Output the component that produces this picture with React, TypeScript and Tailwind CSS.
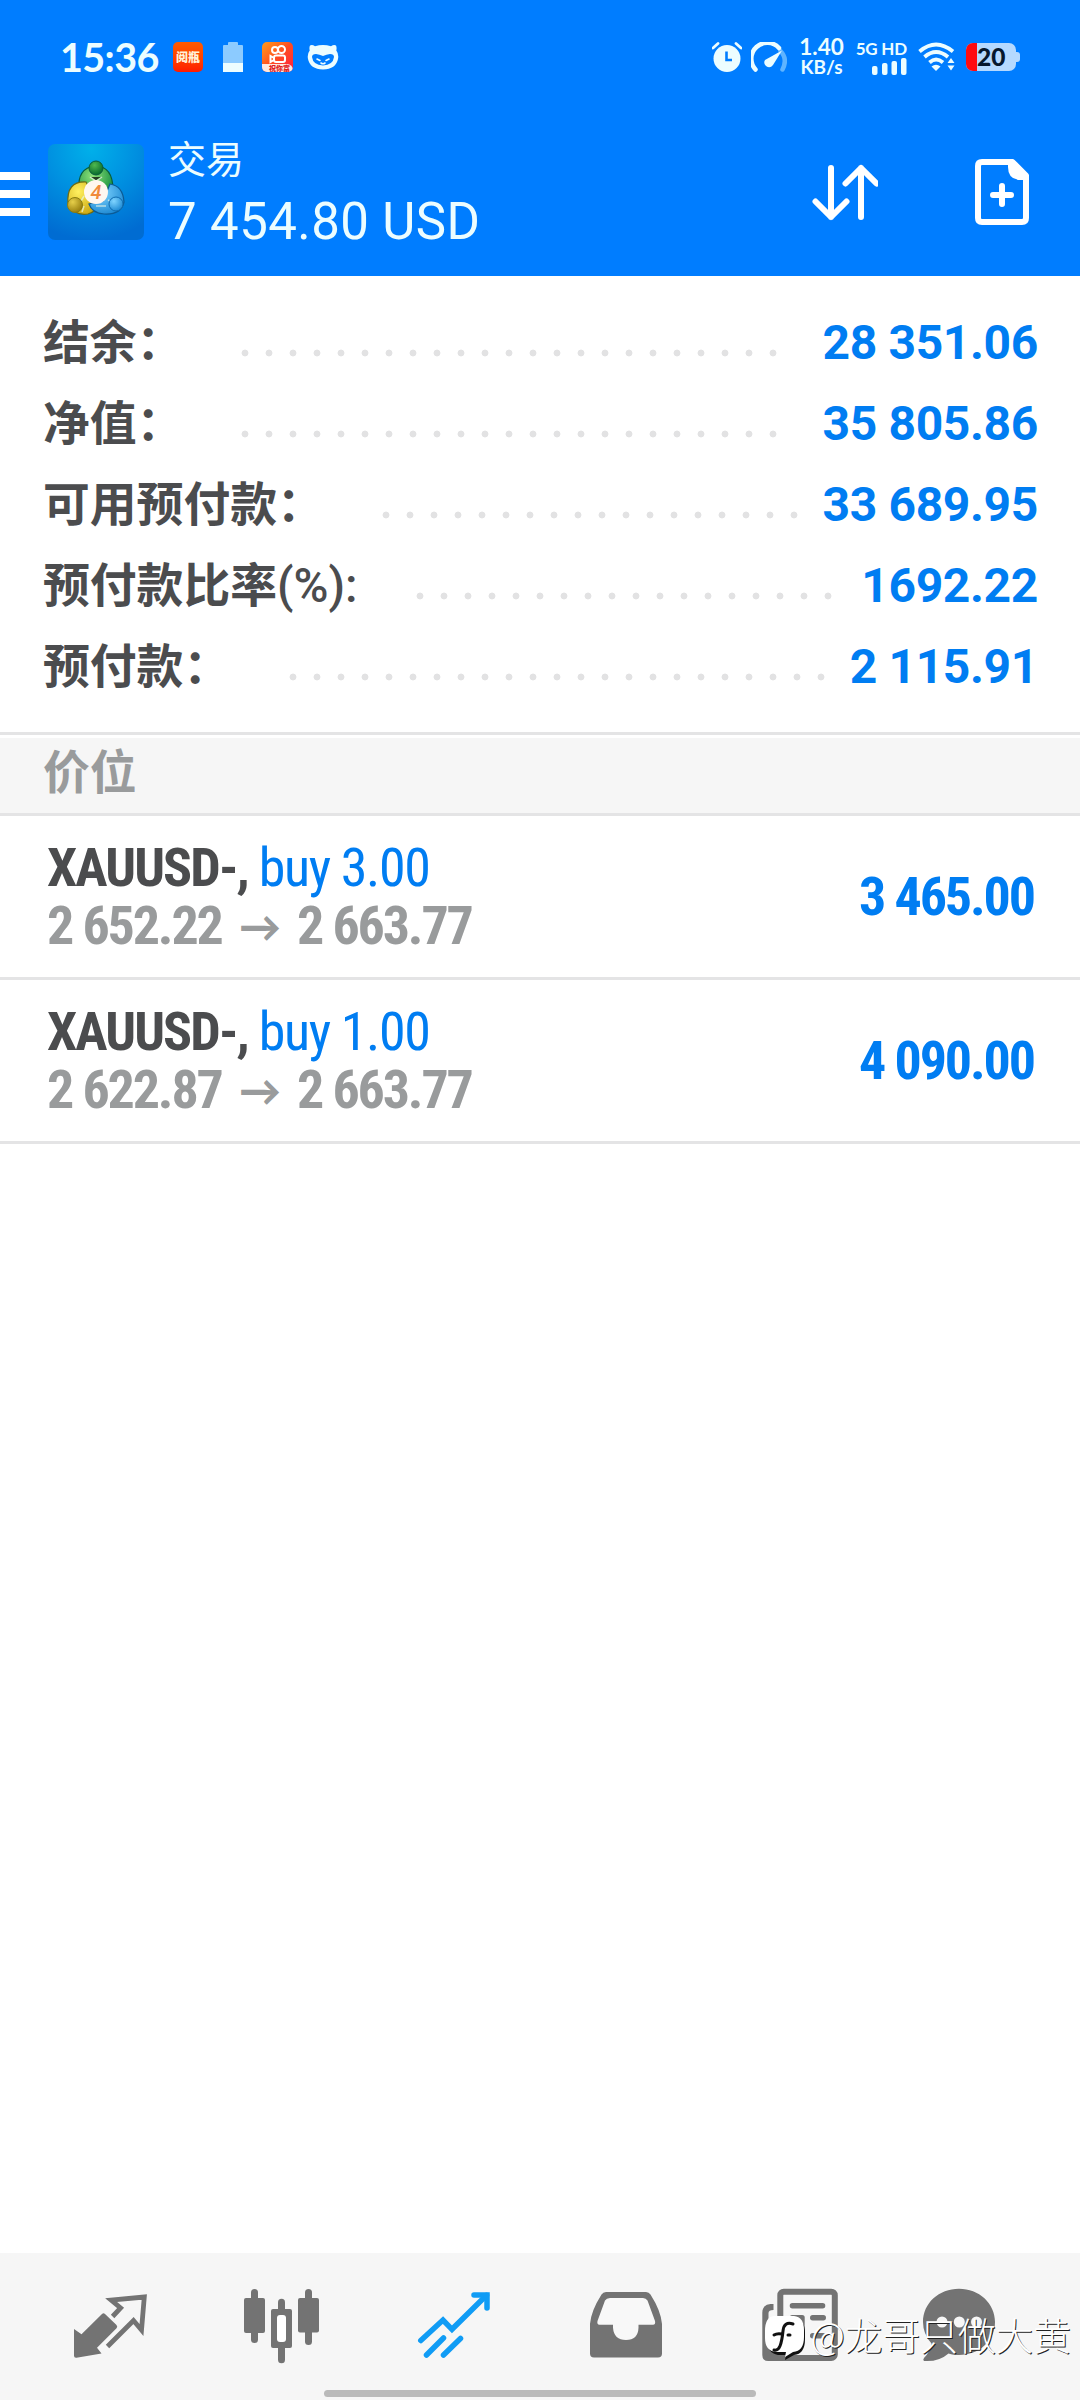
import type { ReactNode } from "react";

type Summary = {
  label: string;
  suffix?: string;
  labelClass: string;
  dotsClass: string;
  value: string;
};

type Position = {
  id: number;
  symbol: string;
  side: string;
  open: string;
  current: string;
  profit: string;
};

const summary: Summary[] = [
  { label: "结余：", labelClass: "w-[190px]", dotsClass: "w-[552px]", value: "28 351.06" },
  { label: "净值：", labelClass: "w-[190px]", dotsClass: "w-[552px]", value: "35 805.86" },
  { label: "可用预付款：", labelClass: "w-[331px]", dotsClass: "w-[432px]", value: "33 689.95" },
  { label: "预付款比率", suffix: "(%):", labelClass: "w-[365px]", dotsClass: "w-[432px]", value: "1692.22" },
  { label: "预付款：", labelClass: "w-[238px]", dotsClass: "w-[552px]", value: "2 115.91" },
];

const positions: Position[] = [
  { id: 1, symbol: "XAUUSD-,", side: "buy 3.00", open: "2 652.22", current: "2 663.77", profit: "3 465.00" },
  { id: 2, symbol: "XAUUSD-,", side: "buy 1.00", open: "2 622.87", current: "2 663.77", profit: "4 090.00" },
];

function StatusBar() {
  return (
    <div className="flex h-[114px] items-center pl-[60px] pr-[60px] text-[#ecfdff]">
      <span className="w-[113px] font-['Lato',sans-serif] text-[39.500px] leading-none font-bold tracking-[-0.600px]">15:36</span>

      <div className="flex h-[30px] w-[30px] items-center justify-center overflow-hidden rounded-[5px] bg-linear-to-b from-[#ff5a00] to-[#ff1a00] font-['Noto_Sans_CJK_SC',sans-serif] text-[12px] leading-none font-black whitespace-nowrap text-[#fff3d8]">
        阅瓶
      </div>

      <svg className="ml-[20px]" width="20" height="30" viewBox="0 0 20 30">
        <path d="M0 4q0-1 1-1h4V1q0-1 1-1h8q1 0 1 1v2h4q1 0 1 1v17H0z" fill="#8ccbff" />
        <path d="M0 21h20v9H0z" fill="#ecfdff" />
      </svg>

      <div className="ml-[19px] flex h-[30px] w-[31px] flex-col overflow-hidden rounded-[5px] bg-linear-to-br from-[#ff9a1a] via-[#ff4a20] to-[#ff1040]">
        <svg className="h-[22px]" width="31" height="22" viewBox="0 0 31 22" fill="none" stroke="#fff" strokeWidth="2">
          <circle cx="13" cy="8" r="3" />
          <circle cx="19.500" cy="7.500" r="3.500" />
          <rect x="12" y="13.500" width="11" height="6.500" rx="2" />
          <path d="M12 16l-3.500-2v6L12 18" />
        </svg>
        <span className="h-[8px] rounded-tr-[6px] bg-[#ffe9e0] pl-[7px] font-['Noto_Sans_CJK_SC',sans-serif] text-[7px] leading-[8px] font-black whitespace-nowrap text-[#e02020]">
          祝你富
        </span>
      </div>

      <svg className="ml-[14px]" width="32" height="26" viewBox="0 0 32 26">
        <path d="M3 1.500q2-1.500 5 .8Q16-.2 24 2.300q3-2.300 5-.8 1 2 .3 5Q32 10 31 15q-2 10-15 10.500Q3 25 1 15 0 10 2.700 6.500 2 3.500 3 1.500z" fill="#ecfdff" />
        <path d="M5 13q0-3 4-3 3.500.3 7 2 3.500-1.700 7-2 4 0 4 3-1 8-11 8.500Q6 21 5 13z" fill="#007dff" />
        <path d="M10 15l3 1.500M22 15l-3 1.500M14 19q2 1.500 4 0" stroke="#ecfdff" strokeWidth="1.600" fill="none" strokeLinecap="round" />
      </svg>

      <div className="ml-auto flex items-center">
        <svg width="30" height="30" viewBox="0 0 30 30">
          <circle cx="15" cy="16.500" r="13.500" fill="#ecfdff" />
          <path d="M1 6l5-4.500M29 6l-5-4.500" stroke="#ecfdff" strokeWidth="2.800" strokeLinecap="round" />
          <path d="M14.500 9.500V18H20" fill="none" stroke="#007dff" strokeWidth="2.600" />
        </svg>
        <svg className="ml-[9px]" width="36" height="30" viewBox="0 0 36 30" fill="none" strokeLinecap="round">
          <path d="M29.500 9Q37 17 31.500 27.500" stroke="#5fb4ff" strokeWidth="4.500" />
          <path d="M4.500 27.500A15.500 15.500 0 0 1 28 6" stroke="#ecfdff" strokeWidth="4.500" />
          <path d="M14 18L31 8.500 22 23q-3 4-7 1-3-3-1-6z" fill="#ecfdff" />
        </svg>
        <div className="ml-[11px] flex w-[47px] flex-col items-center font-['Lato',sans-serif] font-bold">
          <span className="text-[22.500px] leading-[20px]">1.40</span>
          <span className="text-[19px] leading-[20px]">KB/s</span>
        </div>
        <div className="ml-[12px] flex w-[50px] flex-col items-end">
          <span className="font-['Lato',sans-serif] text-[17px] leading-[19px] font-bold tracking-[-0.200px] whitespace-nowrap">5G HD</span>
          <svg width="36" height="17" viewBox="0 0 36 17" fill="#ecfdff">
            <rect x="1" y="8" width="5.500" height="9" rx="2" />
            <rect x="11" y="5" width="5.500" height="12" rx="2" />
            <rect x="20.500" y="3" width="5.500" height="14" rx="2" />
            <rect x="30" y="0" width="5.500" height="17" rx="2" />
          </svg>
        </div>
        <svg className="ml-[11px]" width="38" height="30" viewBox="0 0 38 30" fill="none" stroke="#ecfdff" strokeWidth="3.800">
          <path d="M1.500 9.500Q18 -4.500 35 9.500" />
          <path d="M6.500 15Q18 5 30 15" />
          <path d="M11.500 20.500Q18 14.500 25 20.500" />
          <path d="M13.500 24.500Q18 21 22.500 24.500L18 29z" fill="#ecfdff" stroke="none" />
          <path d="M29.500 21l3.500-5 3.500 5zM29.500 23.500l3.500 5 3.500-5z" fill="#ecfdff" stroke="none" />
        </svg>
        <div className="ml-[10px] flex items-center">
          <div className="flex h-[28px] w-[50px] items-center rounded-[7px] bg-[#b5d9ff]">
            <span className="h-full w-[11px] shrink-0 rounded-l-[7px] bg-[#ff0a10]" />
            <span className="font-['Lato',sans-serif] text-[24.500px] leading-[28px] font-black text-[#06182e]">20</span>
          </div>
          <span className="h-[10px] w-[4px] rounded-r-[3px] bg-[#b5d9ff]" />
        </div>
      </div>
    </div>
  );
}

function AppLogo() {
  return (
    <svg className="ml-[18px]" width="96" height="96" viewBox="0 0 96 96">
      <defs>
        <radialGradient id="tile" cx="0.450" cy="0.050" r="0.950">
          <stop offset="0" stopColor="#00b0ea" />
          <stop offset="0.500" stopColor="#008fe0" />
          <stop offset="1" stopColor="#006cd2" />
        </radialGradient>
        <radialGradient id="green" cx="0.400" cy="0.300" r="0.700">
          <stop offset="0" stopColor="#8fe27a" />
          <stop offset="1" stopColor="#0f8a3c" />
        </radialGradient>
        <radialGradient id="greenHead" cx="0.400" cy="0.300" r="0.700">
          <stop offset="0" stopColor="#4fb84e" />
          <stop offset="1" stopColor="#066a2c" />
        </radialGradient>
        <radialGradient id="yellow" cx="0.350" cy="0.300" r="0.800">
          <stop offset="0" stopColor="#fff060" />
          <stop offset="1" stopColor="#c9a40c" />
        </radialGradient>
        <radialGradient id="yellowHead" cx="0.350" cy="0.300" r="0.800">
          <stop offset="0" stopColor="#e6cf4a" />
          <stop offset="1" stopColor="#8f7608" />
        </radialGradient>
        <radialGradient id="sky" cx="0.350" cy="0.300" r="0.800">
          <stop offset="0" stopColor="#7fd4ff" />
          <stop offset="1" stopColor="#1583cf" />
        </radialGradient>
      </defs>
      <rect width="96" height="96" rx="7" fill="url(#tile)" />
      <path d="M31 46Q29 24 47 22q18 0 18 24 0 6-4 9L34 50z" fill="url(#green)" stroke="#0a5c3a" strokeWidth="1.200" />
      <path d="M38 38q-20-1-18 22 6 12 20 10 8-2 10-10z" fill="url(#yellow)" stroke="#6e6a12" strokeWidth="1.200" />
      <path d="M62 40q13 2 14 18-3 13-20 12-12-1-15-10l14-3z" fill="url(#sky)" stroke="#0c5a94" strokeWidth="1.200" />
      <path d="M36 52l-6 10M36 62l-2 6M58 62l-10 0M60 56l4 2M42 33l6 4 6-4" stroke="#e8f6e8" strokeWidth="1.500" opacity="0.700" />
      <circle cx="48" cy="24" r="7" fill="url(#greenHead)" stroke="#0a5c3a" />
      <circle cx="27" cy="61" r="7.500" fill="url(#yellowHead)" stroke="#8a7c10" />
      <circle cx="68" cy="60" r="7" fill="url(#sky)" stroke="#0f6cb0" />
      <circle cx="48" cy="48" r="12" fill="#fff7f0" />
      <text x="48" y="55" textAnchor="middle" fontSize="20" fontWeight="500" fontStyle="italic" fontFamily="Roboto, sans-serif" fill="#f08a3c">
        4
      </text>
    </svg>
  );
}

function Header() {
  return (
    <header className="bg-[#007dff]">
      <StatusBar />
      <div className="flex h-[162px] items-start pt-[30px] pr-[51px]">
        <div className="mt-[28px] flex w-[30px] flex-col gap-[10px]">
          <span className="h-[8px] bg-white" />
          <span className="h-[8px] bg-white" />
          <span className="h-[8px] bg-white" />
        </div>
        <AppLogo />
        <div className="ml-[24px] flex flex-col font-['Roboto','Noto_Sans_CJK_SC',sans-serif] text-[#ecfdff]">
          <span className="-mt-[8px] text-[38px] leading-[49px]">交易</span>
          <span className="text-[51px] leading-[73px] tracking-[0.400px]">7 454.80 USD</span>
        </div>
        <div className="mt-[15px] ml-auto flex items-center">
          <svg width="66" height="66" viewBox="0 0 66 66" fill="none" stroke="#fff" strokeWidth="6" strokeLinecap="round" strokeLinejoin="round">
            <path d="M19 9v49M3.500 42.500L19 58l15.500-15.500" />
            <path d="M49 58V9M33.500 24.500L49 9l15.500 15.500" />
          </svg>
          <svg className="ml-[97px]" width="54" height="66" viewBox="0 0 54 66" fill="none" stroke="#fff" strokeWidth="6" strokeLinejoin="round">
            <path d="M7 3h30.500L51 16.500V59q0 4-4 4H7q-4 0-4-4V7q0-4 4-4z" />
            <path d="M33 4v4q0 13 13 13h6V16L39 2z" fill="#fff" stroke="none" />
            <path d="M27 27v18M18 36h18" strokeLinecap="round" />
          </svg>
        </div>
      </div>
    </header>
  );
}

function SummaryRow({ item }: { item: Summary }) {
  return (
    <div className="flex h-[81px] items-start font-bold">
      <span className={`shrink-0 text-[46.800px] leading-[83px] whitespace-nowrap text-[#4b4c4e] ${item.labelClass}`}>
        {item.label}
        {item.suffix && <span className="text-[47.500px] font-medium">{item.suffix}</span>}
      </span>
      <span
        className={`mt-[47px] h-[8px] shrink-0 bg-[radial-gradient(circle_at_12px_4px,#e2e2e3_3px,transparent_3.800px)] bg-[length:24px_8px] ${item.dotsClass}`}
      />
      <span className="ml-auto text-[48px] leading-[82px] tracking-[-0.350px] whitespace-nowrap text-[#007df2]">{item.value}</span>
    </div>
  );
}

function PositionRow({ item }: { item: Position }) {
  return (
    <div className="flex h-[164px] items-center border-b-[3px] border-[#e4e4e5] pr-[46px] pl-[47px] font-['Roboto_Condensed','Roboto',sans-serif] text-[54px] font-bold whitespace-nowrap">
      <div className="flex flex-col leading-[58px]">
        <p className="text-[#4b4c4e]">
          <span className="tracking-[-1.900px]">{item.symbol}</span>
          <span className="ml-[11px] font-normal tracking-[-1.400px] text-[#007df2]">{item.side}</span>
        </p>
        <p className="flex text-[#999b9c]">
          <span className="w-[192px] tracking-[-2.150px]">{item.open}</span>
          <span className="w-[58px] font-['Lato',sans-serif] text-[42px] font-black">→</span>
          <span className="tracking-[-2.150px]">{item.current}</span>
        </p>
      </div>
      <span className="ml-auto tracking-[-2.100px] text-[#007df2]">{item.profit}</span>
    </div>
  );
}

function NavIcon({ children }: { children: ReactNode }) {
  return (
    <svg width="84" height="84" viewBox="0 0 84 84" fill="#737373">
      {children}
    </svg>
  );
}

function BottomNav() {
  return (
    <nav className="relative h-[147px] bg-[#f6f6f6] pt-[30px] pl-[24px]">
      <div className="flex">
        <div className="flex w-[172px] justify-center">
          <NavIcon>
            <path d="M6 46l7.500 5.300 20.500-20.300q1.500-1.300 3 0l11.500 11q1.500 1.700 0 3.200L29 64.700l4.500 5.800L8.500 74.700Q6 75 6 72.700z" />
            <path d="M44.600 33.500l8-8.500-9.500-8 33.200-3-2.800 33-8-9.500-26 26" fill="none" stroke="#737373" strokeWidth="4.800" />
          </NavIcon>
        </div>
        <div className="flex w-[172px] justify-center">
          <NavIcon>
            <rect x="11" y="6" width="7" height="54" rx="3.500" />
            <rect x="4" y="15" width="21" height="35" rx="2" />
            <rect x="38" y="15.700" width="7" height="64.500" rx="3.500" />
            <rect x="31" y="26" width="21" height="39" rx="2" />
            <rect x="37" y="32" width="9" height="27" rx="3" fill="#fff" />
            <rect x="65" y="6" width="7" height="56" rx="3.500" />
            <rect x="58" y="15" width="21" height="34.500" rx="2" />
          </NavIcon>
        </div>
        <div className="flex w-[172px] justify-center">
          <NavIcon>
            <g fill="none" stroke="#109cf5" strokeWidth="5.500" strokeLinecap="round">
              <path d="M8.800 57.500L31 37l9 9.300 34.500-34" />
              <path d="M62 12h13v13" />
              <path d="M14.500 72l17-17M31.500 72l17-16.500" />
            </g>
          </NavIcon>
        </div>
        <div className="flex w-[172px] justify-center">
          <NavIcon>
            <path d="M22 9h40q3 0 4.500 2.500Q77 28 78 41v29.500q0 4-4 4H10q-4 0-4-4V41Q7 28 17.500 11.500 19 9 22 9z" />
            <path d="M26 15h33q3 0 4.500 2.500L71 38q.8 3.700-2 3.700H54.500v3Q54 57 42 57T29 44.700v-3H15.500q-2.800 0-2-3.700L21 17.500Q22.500 15 26 15z" fill="#f8f8f8" />
          </NavIcon>
        </div>
        <div className="flex w-[175px] justify-center">
          <NavIcon>
            <path d="M15.500 21h-3Q4.300 21.500 4.300 30v42q0 6 6 6h20V62H10.500V30q0-3 5-3z" />
            <rect x="22.300" y="8.700" width="54.500" height="66.300" rx="3.500" fill="#f6f6f6" stroke="#737373" strokeWidth="6" />
            <rect x="31.700" y="20" width="35.600" height="5.500" rx="2.700" />
            <rect x="31.700" y="32" width="15" height="24" rx="2.500" />
            <rect x="52" y="32" width="16" height="5.500" rx="2.700" />
            <rect x="52" y="50" width="16" height="5.500" rx="2.700" />
          </NavIcon>
        </div>
        <div className="flex w-[143px] justify-center">
          <NavIcon>
            <path d="M42 5.700c20 0 36 14.500 36 33.300S62 72 42 72c-4 0-7-.5-10.500-1.500Q22 79 7 78q-1.500-1 0-3 6-6 7.500-14.500Q6 51 6 39C6 20 22 5.700 42 5.700z" />
            <circle cx="25" cy="39" r="5.500" fill="#f6f6f6" />
            <circle cx="42.300" cy="39" r="5.500" fill="#f6f6f6" />
            <circle cx="59.500" cy="39" r="5.500" fill="#f6f6f6" />
          </NavIcon>
        </div>
      </div>

      {/* Author tag over the tab icons */}
      <div className="absolute top-[54px] right-[9px] flex items-center text-white">
        <svg className="mt-[7px] mr-[4px]" width="42" height="46" viewBox="0 0 42 46">
          <path d="M11 4h20q9 1 9 14v6q0 15-11 16l-9 5 1-5H13Q2 38 2 25v-7Q2 5 11 4z" fill="#111" />
          <path d="M9 1h20q10 1 10 14v7q0 14-11 15l-8 5 1-5H11Q0 36 0 23v-7Q0 2 9 1z" fill="#fff" />
          <path d="M28 9q-9-3-10 7-1 10-3 15t-6 4M9 20q3-2 8-1M23 20h2" fill="none" stroke="#111" strokeWidth="3" strokeLinecap="round" />
        </svg>
        <span className="font-['Noto_Sans_CJK_SC',sans-serif] text-[37.700px] leading-[54px] font-light whitespace-nowrap [text-shadow:1px_1px_0_#222]">
          @龙哥只做大黄
        </span>
      </div>

      <div className="absolute bottom-[3px] left-[324px] h-[7px] w-[432px] rounded-full bg-[#bababa]" />
    </nav>
  );
}

export default function App() {
  return (
    <div className="flex h-[2400px] w-[1080px] flex-col overflow-hidden bg-white font-['Roboto','Noto_Sans_CJK_SC',sans-serif]">
      <Header />

      <section className="pt-[26px] pr-[42px] pb-[25px] pl-[43px]">
        {summary.map((item) => (
          <SummaryRow key={item.label} item={item} />
        ))}
      </section>

      <div className="h-[84px] border-y-[3px] border-[#e4e4e5] pt-[3px]">
        <h2 className="h-[75px] bg-[#f6f6f6] pl-[43px] text-[46.800px] leading-[71px] font-bold text-[#999b9c]">价位</h2>
      </div>

      <main className="flex-1">
        {positions.map((item) => (
          <PositionRow key={item.id} item={item} />
        ))}
      </main>

      <BottomNav />
    </div>
  );
}
